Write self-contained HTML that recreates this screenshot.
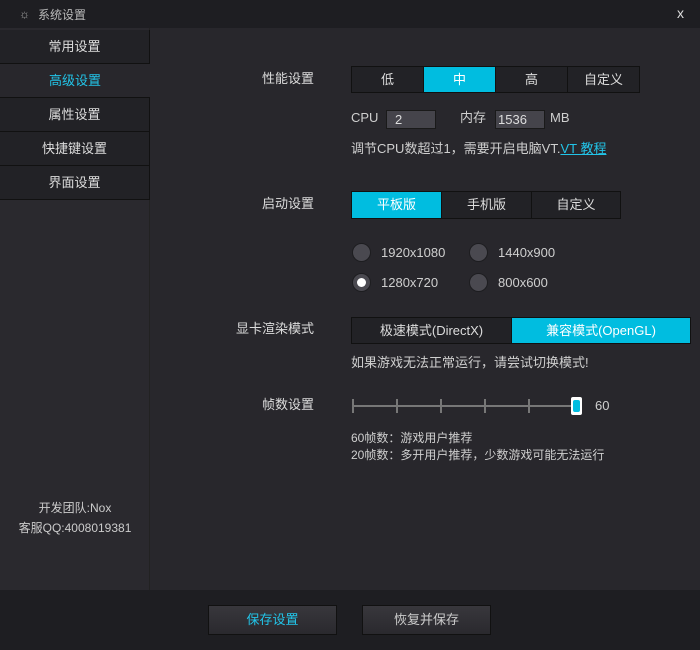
<!DOCTYPE html><html><head><meta charset="utf-8"><style>
*{margin:0;padding:0;box-sizing:border-box}
body{width:700px;height:650px;background:#28272c;font-family:"Liberation Sans","Noto Sans CJK SC",sans-serif;font-size:12px;color:#cfcfcf;position:relative;overflow:hidden}
.a{position:absolute}
.title{left:0;top:0;width:700px;height:28px;background:#1e1e22}
.side{left:0;top:28px;width:150px;height:562px;background:#2a292e;border-right:1px solid #222}
.item{position:absolute;left:0;width:150px;height:34px;background:#222226;border-bottom:1px solid #111;border-right:1px solid #111;text-align:center;line-height:33px;font-size:13px;color:#ddd}
.item.on{background:#28272c;color:#22c4e8;border-right:none}
.lbl{position:absolute;width:120px;text-align:right;left:194px;font-size:13px;color:#ddd;line-height:16px}
.seg{position:absolute;display:flex;border:1px solid #111;background:#222226}
.seg div{text-align:center;border-right:1px solid #111;font-size:13px;color:#ddd}
.seg div:last-child{border-right:none}
.seg .on{background:#00bde0;color:#fff}
.inp{position:absolute;height:19px;background:#45444b;border:1px solid #1a1a1a;color:#ddd;font-size:13px;padding-left:8px;line-height:17px}
.r{position:absolute;width:19px;height:19px;border-radius:50%;background:#4a4950;border:1px solid #1d1d20}
.bottom{left:0;top:590px;width:700px;height:60px;background:#1e1e22}
.btn{position:absolute;top:605px;width:129px;height:30px;background:linear-gradient(#38373c,#2a292e);border:1px solid #111;text-align:center;line-height:28px;font-size:13px}
.t{position:absolute;font-size:13px;line-height:16px}
.tk{position:absolute;top:399px;width:2px;height:14px;background:#777}
</style></head><body>
<div class="a title"><span class="a" style="left:19px;top:7px;color:#aaa;font-size:12px">☼</span><span class="a" style="left:38px;top:6px;color:#bbb;font-size:12px">系统设置</span><span class="a" style="left:677px;top:5px;color:#ddd;font-size:14px">x</span></div>
<div class="a side">
<div class="item" style="top:2px">常用设置</div>
<div class="item on" style="top:36px">高级设置</div>
<div class="item" style="top:70px">属性设置</div>
<div class="item" style="top:104px">快捷键设置</div>
<div class="item" style="top:138px">界面设置</div>
<div class="a" style="top:470px;width:150px;text-align:center;color:#ccc;font-size:12px;line-height:20px">开发团队:Nox<br>客服QQ:4008019381</div>
</div>
<div class="lbl" style="top:71px">性能设置</div>
<div class="seg" style="left:351px;top:66px;height:27px"><div style="width:72px;line-height:25px">低</div><div class="on" style="width:72px;line-height:25px">中</div><div style="width:72px;line-height:25px">高</div><div style="width:71px;line-height:25px">自定义</div></div>
<span class="t" style="left:351px;top:110px">CPU</span>
<div class="inp" style="left:386px;top:110px;width:50px">2</div>
<span class="t" style="left:460px;top:110px">内存</span>
<div class="inp" style="left:495px;top:110px;width:50px;padding-left:2px">1536</div>
<span class="t" style="left:550px;top:110px">MB</span>
<span class="t" style="left:351px;top:141px">调节CPU数超过1，需要开启电脑VT.<span style="color:#22c4e8;text-decoration:underline">VT 教程</span></span>
<div class="lbl" style="top:196px">启动设置</div>
<div class="seg" style="left:351px;top:191px;height:28px"><div class="on" style="width:90px;line-height:26px">平板版</div><div style="width:90px;line-height:26px">手机版</div><div style="width:88px;line-height:26px">自定义</div></div>
<div class="r" style="left:352px;top:243px"></div><span class="t" style="left:381px;top:245px">1920x1080</span>
<div class="r" style="left:469px;top:243px"></div><span class="t" style="left:498px;top:245px">1440x900</span>
<div class="r" style="left:352px;top:273px"><div class="a" style="left:4px;top:4px;width:9px;height:9px;border-radius:50%;background:#fff"></div></div><span class="t" style="left:381px;top:275px">1280x720</span>
<div class="r" style="left:469px;top:273px"></div><span class="t" style="left:498px;top:275px">800x600</span>
<div class="lbl" style="top:321px">显卡渲染模式</div>
<div class="seg" style="left:351px;top:317px;height:27px"><div style="width:160px;line-height:25px">极速模式(DirectX)</div><div class="on" style="width:178px;line-height:25px">兼容模式(OpenGL)</div></div>
<span class="t" style="left:351px;top:355px">如果游戏无法正常运行，请尝试切换模式!</span>
<div class="lbl" style="top:397px">帧数设置</div>
<div class="a" style="left:352px;top:405px;width:222px;height:2px;background:#777"></div>
<div class="tk" style="left:352px"></div><div class="tk" style="left:396px"></div><div class="tk" style="left:440px"></div><div class="tk" style="left:484px"></div><div class="tk" style="left:528px"></div>
<div class="a" style="left:571px;top:397px;width:11px;height:18px;background:#fff;border-radius:2px"><div class="a" style="left:2px;top:3px;width:7px;height:12px;background:#00bde0;border-radius:2px"></div></div>
<span class="t" style="left:595px;top:398px">60</span>
<span class="a" style="left:351px;top:430px;font-size:12px;line-height:17px">60帧数：游戏用户推荐<br>20帧数：多开用户推荐，少数游戏可能无法运行</span>
<div class="a bottom"></div>
<div class="btn" style="left:208px;color:#22c4e8">保存设置</div>
<div class="btn" style="left:362px;color:#ccc">恢复并保存</div>
</body></html>
